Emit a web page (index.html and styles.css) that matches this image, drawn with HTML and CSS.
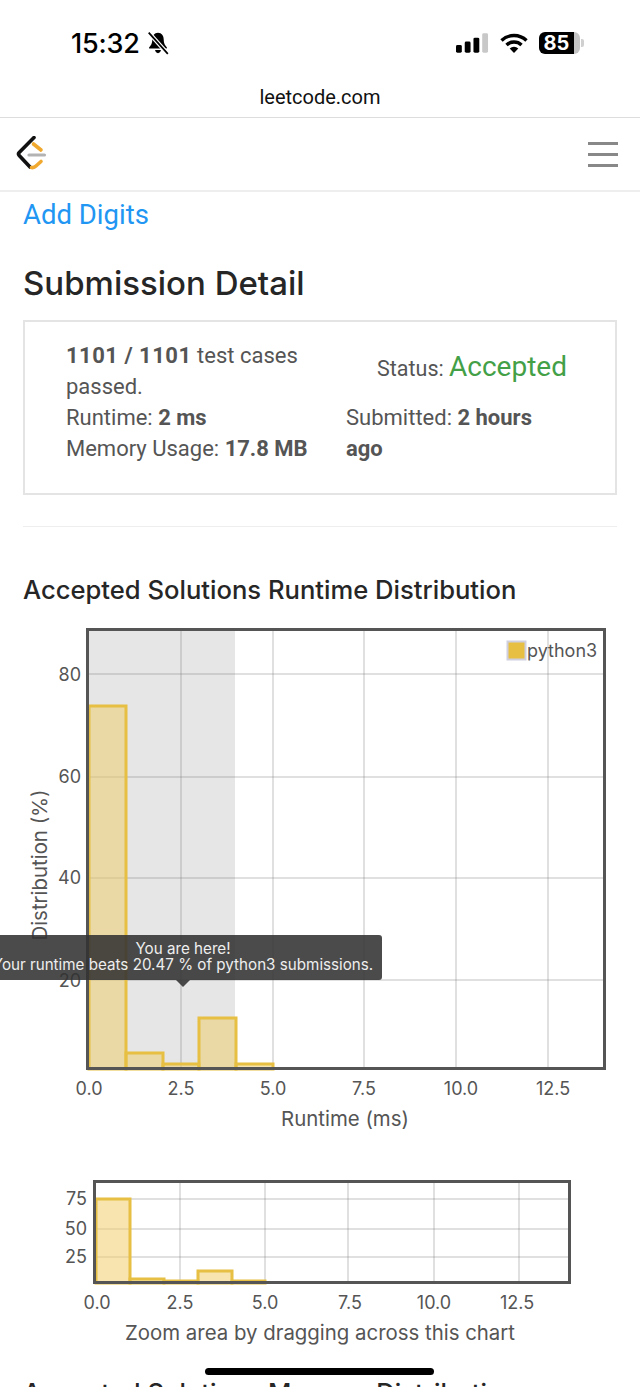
FILE: index.html
```html
<!DOCTYPE html>
<html lang="en">
<head>
    <meta charset="UTF-8">
    <meta name="viewport" content="width=device-width, initial-scale=1.0">
    <title>Submission Detail</title>
    <link rel="stylesheet" href="styles.css">
</head>
<body>
    <div class="status-bar">
        <div class="status-left">
            <span class="clock">15:32</span>
            <svg class="bell" width="24" height="24" viewBox="0 0 22 22">
                <path d="M11 1.500c-3.400 0-5.200 2.800-5.200 6 0 3.800-1.300 5.800-2.800 7.300-.5.600-.2 1.200.6 1.200h14.800c.8 0 1.100-.6.600-1.200-1.500-1.500-2.800-3.500-2.800-7.300 0-3.200-1.800-6-5.200-6z" fill="#000"/>
                <path d="M8.300 17.500h5.400c-.3 1.700-1.400 2.800-2.700 2.800s-2.400-1.100-2.700-2.800z" fill="#000"/>
                <path d="M2.500 1.500 L20 21" stroke="#fff" stroke-width="3.800"/>
                <path d="M2.500 1.500 L20 21" stroke="#000" stroke-width="1.600"/>
            </svg>
        </div>
        <div class="status-right">
            <svg width="33" height="22" viewBox="0 0 34 22">
                <rect x="0" y="13" width="6" height="8" rx="1.500" fill="#000"/>
                <rect x="9" y="9.500" width="6" height="11.500" rx="1.500" fill="#000"/>
                <rect x="18" y="5.500" width="6" height="15.500" rx="1.500" fill="#000"/>
                <rect x="27" y="1" width="6" height="20" rx="1.500" fill="#c8c8c8"/>
            </svg>
            <svg width="28" height="22" viewBox="0 0 28 22">
                <path d="M1.500 8.500a18 18 0 0 1 25 0" fill="none" stroke="#000" stroke-width="3.400"/>
                <path d="M6.500 13a11 11 0 0 1 15 0" fill="none" stroke="#000" stroke-width="3.400"/>
                <path d="M14 21l-4.300-4.600a6.200 6.200 0 0 1 8.600 0z" fill="#000"/>
            </svg>
            <div class="battery">
                <span class="battery-level">85</span>
                <span class="battery-rest"></span>
                <span class="battery-cap"></span>
            </div>
        </div>
    </div>

    <div class="url-bar">leetcode.com</div>

    <nav class="navbar">
        <svg width="32" height="36" viewBox="0 0 32 36">
            <path d="M18 1.500 L3.200 16.500 Q1.800 18 3.200 19.500 L14 31" fill="none" stroke="#111" stroke-width="3.600" stroke-linecap="round"/>
            <path d="M17.500 8 L25 14" fill="none" stroke="#f0a92e" stroke-width="3.600" stroke-linecap="round"/>
            <path d="M15.500 31.500 Q18 32 20 30 L25 25.500" fill="none" stroke="#f0a92e" stroke-width="3.600" stroke-linecap="round"/>
            <path d="M13 19 H28.500" stroke="#b3b3b3" stroke-width="3.200" stroke-linecap="round"/>
        </svg>
        <div class="hamburger">
            <span></span>
            <span></span>
            <span></span>
        </div>
    </nav>

    <main class="content">
        <a class="problem-link" href="#">Add Digits</a>
        <h1 class="page-title">Submission Detail</h1>

        <div class="detail-box">
            <div class="detail-col detail-left">
                <div class="detail-passed"><b>1101 / 1101</b> test cases passed.</div>
                <div>Runtime: <b>2 ms</b></div>
                <div>Memory Usage: <b>17.8 MB</b></div>
            </div>
            <div class="detail-col detail-right">
                <div class="detail-status">Status: <span class="accepted">Accepted</span></div>
                <div class="detail-submitted">Submitted: <b>2 hours ago</b></div>
            </div>
        </div>

        <hr class="divider">

        <h2 class="chart-title">Accepted Solutions Runtime Distribution</h2>
    </main>

    <div class="chart-main">
        <svg class="chart-svg" width="640" height="520" viewBox="0 620 640 520">
            <rect class="shade" x="89" y="631" width="146" height="437"/>
            <g class="grid">
                <path d="M181 631V1068M273 631V1068M364 631V1068M456 631V1068M548 631V1068"/>
                <path d="M89 674H603M89 777H603M89 878H603M89 980H603"/>
            </g>
            <g class="bars">
                <rect x="89" y="706" width="37" height="363"/>
                <rect x="126" y="1053" width="37" height="16"/>
                <rect x="163" y="1064" width="36" height="5"/>
                <rect x="199" y="1018" width="37" height="51"/>
                <rect x="236" y="1064" width="37" height="5"/>
            </g>
            <rect class="frame" x="87.500" y="629.500" width="517" height="439"/>
            <rect class="legend-box" x="507.500" y="641.500" width="18" height="18"/>
            <text class="tick" x="527" y="657">python3</text>
            <g class="tick tick-end">
                <text x="81" y="681">80</text>
                <text x="81" y="783">60</text>
                <text x="81" y="884">40</text>
                <text x="81" y="987">20</text>
            </g>
            <g class="tick tick-mid">
                <text x="89" y="1095">0.0</text>
                <text x="181" y="1095">2.5</text>
                <text x="273" y="1095">5.0</text>
                <text x="364" y="1095">7.5</text>
                <text x="461" y="1095">10.0</text>
                <text x="553" y="1095">12.5</text>
            </g>
            <text class="axis-label tick-mid" x="345" y="1126">Runtime (ms)</text>
            <text class="axis-label tick-mid" transform="translate(47 865) rotate(-90)">Distribution (%)</text>
        </svg>
        <div class="tooltip">
            <div>You are here!</div>
            <div class="tooltip-line">Your runtime beats 20.47 % of python3 submissions.</div>
        </div>
    </div>

    <div class="chart-overview">
        <svg class="chart-svg" width="640" height="180" viewBox="0 1170 640 180">
            <g class="grid">
                <path d="M180 1183V1282M265 1183V1282M348 1183V1282M434 1183V1282M519 1183V1282"/>
                <path d="M96 1199H568M96 1229H568M96 1257H568"/>
            </g>
            <g class="bars bars-light">
                <rect x="96" y="1199" width="34" height="84"/>
                <rect x="130" y="1279" width="34" height="4"/>
                <rect x="164" y="1281" width="34" height="2"/>
                <rect x="198" y="1271" width="34" height="12"/>
                <rect x="232" y="1281" width="33" height="2"/>
            </g>
            <rect class="frame" x="94.500" y="1181.500" width="475" height="101"/>
            <g class="tick tick-end">
                <text x="87" y="1205">75</text>
                <text x="87" y="1235">50</text>
                <text x="87" y="1263">25</text>
            </g>
            <g class="tick tick-mid">
                <text x="97" y="1309">0.0</text>
                <text x="180" y="1309">2.5</text>
                <text x="265" y="1309">5.0</text>
                <text x="350" y="1309">7.5</text>
                <text x="434" y="1309">10.0</text>
                <text x="517" y="1309">12.5</text>
            </g>
            <text class="axis-label tick-mid" x="320" y="1340">Zoom area by dragging across this chart</text>
        </svg>
    </div>

    <h2 class="chart-title next-title">Accepted Solutions Memory Distribution</h2>

    <div class="home-indicator"></div>
</body>
</html>
```

FILE: styles.css
```css
:root {
    --text: #555;
    --dark: #262626;
    --bar: #e6bf43;
}

html, body {
    height: 1387px;
    overflow: hidden;
}

body {
    margin: 0;
    position: relative;
    background: #fff;
    font-family: Roboto, "Liberation Sans", sans-serif;
    color: var(--text);
}

/* phone status bar */
.status-bar {
    height: 74px;
    padding: 12px 56px 0 71px;
    box-sizing: border-box;
    display: flex;
    justify-content: space-between;
    align-items: center;
}

.status-left, .status-right {
    display: flex;
    align-items: center;
}

.status-left {
    gap: 6px;
}

.status-right {
    gap: 11px;
}

.clock {
    font-family: Inter, Roboto, sans-serif;
    font-size: 27px;
    font-weight: 500;
    color: #000;
    letter-spacing: -0.2px;
}

.battery {
    display: flex;
    align-items: center;
    position: relative;
}

.battery-level {
    width: 35px;
    height: 22px;
    line-height: 22px;
    background: #000;
    color: #fff;
    font-family: Inter, Roboto, sans-serif;
    font-size: 20px;
    font-weight: 700;
    text-align: center;
    border-radius: 6px 0 0 6px;
}

.battery-rest {
    width: 6px;
    height: 22px;
    background: #c4c4c4;
    border-radius: 0 6px 6px 0;
}

.battery-cap {
    width: 3px;
    height: 8px;
    margin-left: 1px;
    background: #d0d0d0;
    border-radius: 0 2px 2px 0;
}

.url-bar {
    height: 43px;
    line-height: 46px;
    text-align: center;
    font-size: 20px;
    color: #111;
    border-bottom: 1px solid #ddd;
}

.navbar {
    height: 72px;
    padding: 0 22px 0 16px;
    display: flex;
    justify-content: space-between;
    align-items: center;
    border-bottom: 2px solid #eee;
}

.hamburger {
    width: 30px;
    display: flex;
    flex-direction: column;
    gap: 8px;
}

.hamburger span {
    height: 3px;
    background: #888;
}

.content {
    padding: 0 23px;
}

.problem-link {
    display: block;
    height: 46px;
    line-height: 46px;
    font-size: 27.500px;
    color: #2196f3;
    text-decoration: none;
}

.page-title {
    margin: 0;
    padding-top: 25px;
    height: 40px;
    line-height: 40px;
    font-family: Inter, Roboto, sans-serif;
    font-size: 33px;
    font-weight: 500;
    color: var(--dark);
}

.detail-box {
    height: 175px;
    box-sizing: border-box;
    margin-top: 17px;
    padding: 18px 0 0 41px;
    border: 2px solid #e4e4e4;
    display: flex;
    font-size: 22px;
    line-height: 31px;
}

.detail-box b {
    font-weight: 700;
}

.detail-left {
    width: 280px;
    flex: none;
}

.detail-passed {
    width: 250px;
}

.detail-passed b {
    letter-spacing: 0.5px;
}

.detail-right {
    width: 205px;
}

.detail-status {
    height: 62px;
    padding: 11px 0 0 31px;
    box-sizing: border-box;
    white-space: nowrap;
    font-size: 21.500px;
}

.accepted {
    font-size: 28px;
    color: #43a047;
}

.divider {
    border: 0;
    height: 1px;
    margin: 31px 0 0;
    background: #eee;
}

.chart-title {
    margin: 45px 0 0;
    height: 36px;
    line-height: 36px;
    font-family: Inter, Roboto, sans-serif;
    font-size: 25.600px;
    font-weight: 500;
    color: var(--dark);
    white-space: nowrap;
}

.chart-main {
    position: relative;
    margin-top: 12px;
}

.chart-svg {
    display: block;
}

.chart-overview {
    margin-top: 30px;
}

.shade {
    fill: #e6e6e6;
}

.grid path {
    fill: none;
    stroke: rgba(120, 120, 120, 0.3);
    stroke-width: 1.500;
}

.bars rect {
    fill: rgba(236, 205, 110, 0.55);
    stroke: var(--bar);
    stroke-width: 3;
}

.bars-light rect {
    fill: rgba(240, 205, 110, 0.55);
}

.frame {
    fill: none;
    stroke: #555;
    stroke-width: 3;
}

.legend-box {
    fill: var(--bar);
    stroke: #cfcfe0;
    stroke-width: 2;
}

.tick {
    font-family: Inter, Roboto, sans-serif;
    font-size: 18px;
    fill: var(--text);
}

.tick-end {
    text-anchor: end;
}

.tick-mid {
    text-anchor: middle;
}

.axis-label {
    font-family: Inter, Roboto, sans-serif;
    font-size: 20.400px;
    fill: var(--text);
}

/* tooltip sits over the chart and runs off the left edge */
.tooltip {
    position: absolute;
    left: -9px;
    top: 315px;
    width: 391px;
    height: 45px;
    box-sizing: border-box;
    padding: 6px 7px 0 0;
    background: rgba(50, 50, 50, 0.88);
    border-radius: 3px;
    color: #eee;
    font-family: Inter, Roboto, sans-serif;
    font-size: 15.200px;
    line-height: 16px;
    text-align: center;
    white-space: nowrap;
}

.tooltip::after {
    content: "";
    position: absolute;
    left: 185px;
    top: 45px;
    border: 7px solid transparent;
    border-top-color: rgba(50, 50, 50, 0.88);
    border-bottom: 0;
}

.next-title {
    margin: 25px 0 0 23px;
}

.home-indicator {
    position: absolute;
    left: 205px;
    top: 1368px;
    width: 229px;
    height: 7px;
    border-radius: 4px;
    background: #000;
}
```
